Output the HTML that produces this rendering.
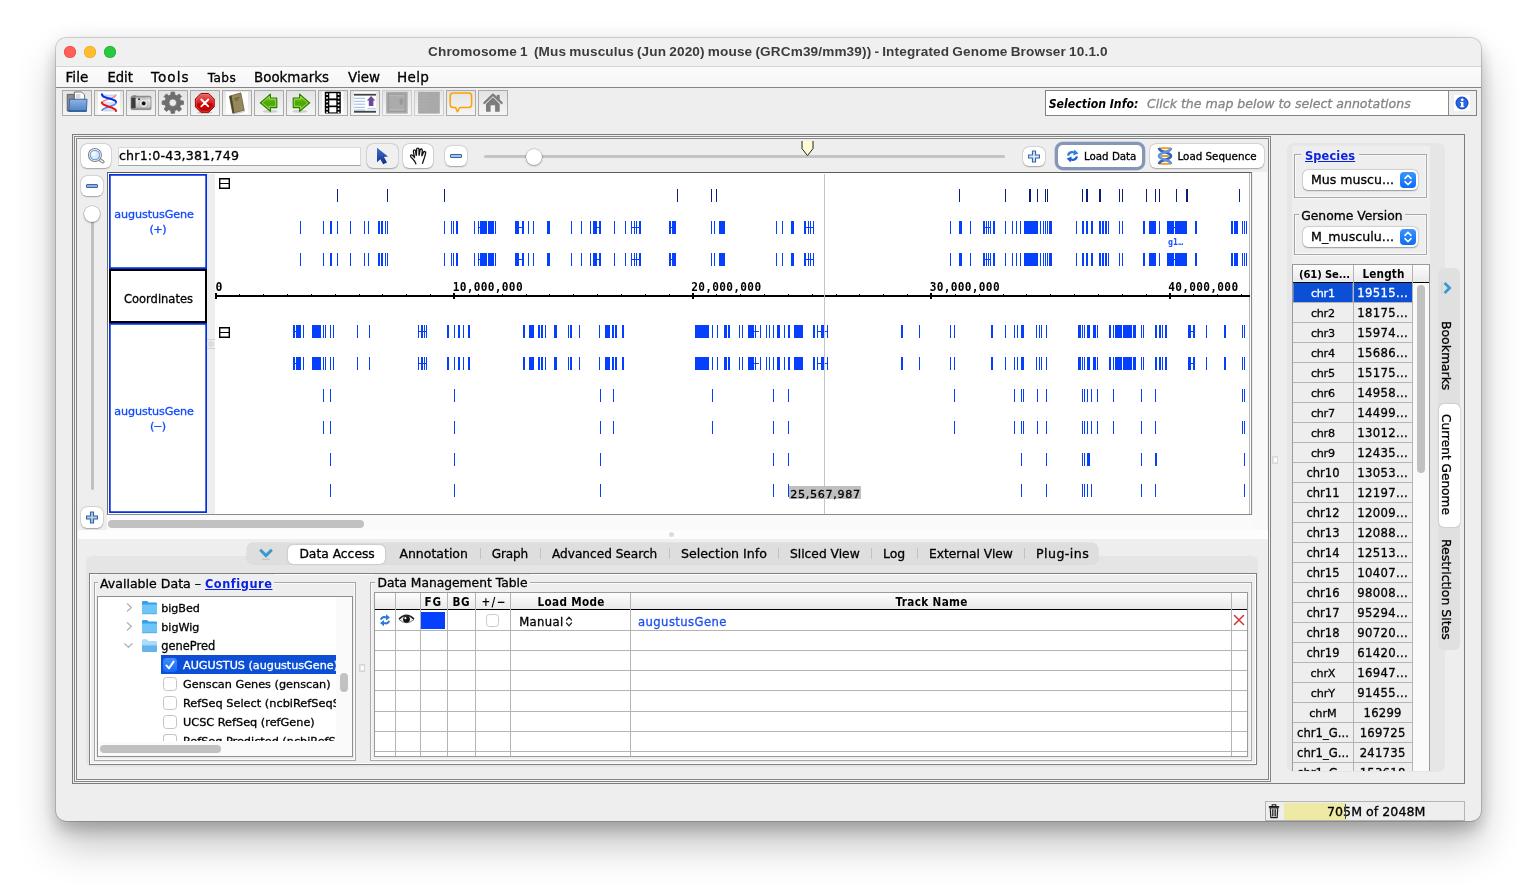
<!DOCTYPE html>
<html><head><meta charset="utf-8"><title>Integrated Genome Browser</title><style>
html,body{margin:0;padding:0;background:#fff;}
body{width:1537px;height:895px;position:relative;overflow:hidden;}
div,svg,span{position:absolute;box-sizing:border-box;}
.t{white-space:pre;line-height:20px;height:20px;}
#root{left:0;top:0;width:1537px;height:895px;will-change:transform;}
</style></head><body><div id="root">
<div style="left:55.7px;top:37.5px;width:1425.8px;height:783px;background:#eeeeee;border-radius:10px;box-shadow:0 0 0 0.7px rgba(0,0,0,0.22),0 24px 40px rgba(0,0,0,0.24),0 10px 16px rgba(0,0,0,0.18),0 0 22px rgba(0,0,0,0.07);"></div>
<div style="left:55.7px;top:37.5px;width:1425.8px;height:29.5px;background:#f0f0f0;border-radius:10px 10px 0 0;border-bottom:1px solid #d6d6d6;"></div>
<div style="left:64px;top:46px;width:12px;height:12px;background:#fe5f57;border-radius:50%;box-shadow:inset 0 0 0 0.5px #e0443e;"></div>
<div style="left:84px;top:46px;width:12px;height:12px;background:#febc2e;border-radius:50%;box-shadow:inset 0 0 0 0.5px #dea123;"></div>
<div style="left:104px;top:46px;width:12px;height:12px;background:#28c840;border-radius:50%;box-shadow:inset 0 0 0 0.5px #1aab29;"></div>
<span id="t0" class="t" style="left:428px;top:41.50px;font-size:13.58px;font-family:'Liberation Sans','DejaVu Sans',sans-serif;color:#3c3c3c;font-weight:bold;letter-spacing:0.141px;word-spacing:-0.8px;">Chromosome 1  (Mus musculus (Jun 2020) mouse (GRCm39/mm39)) - Integrated Genome Browser 10.1.0</span>
<div style="left:55.7px;top:67px;width:1425.8px;height:21px;background:linear-gradient(#fbfbfb,#f6f6f6);border-bottom:1px solid #858585;"></div>
<span id="t1" class="t" style="left:65.5px;top:67.00px;font-size:13.58px;font-family:'DejaVu Sans','Liberation Sans',sans-serif;color:#000;-webkit-text-stroke:0.3px;letter-spacing:0.022px;">File</span>
<span id="t2" class="t" style="left:107.4px;top:67.50px;font-size:13.16px;font-family:'DejaVu Sans','Liberation Sans',sans-serif;color:#000;-webkit-text-stroke:0.3px;">Edit</span>
<span id="t3" class="t" style="left:151px;top:67.00px;font-size:13.58px;font-family:'DejaVu Sans','Liberation Sans',sans-serif;color:#000;-webkit-text-stroke:0.3px;letter-spacing:1.009px;">Tools</span>
<span id="t4" class="t" style="left:207.8px;top:68.00px;font-size:12.12px;font-family:'DejaVu Sans','Liberation Sans',sans-serif;color:#000;-webkit-text-stroke:0.3px;letter-spacing:0.381px;">Tabs</span>
<span id="t5" class="t" style="left:254px;top:67.50px;font-size:13.42px;font-family:'DejaVu Sans','Liberation Sans',sans-serif;color:#000;-webkit-text-stroke:0.3px;">Bookmarks</span>
<span id="t6" class="t" style="left:348px;top:67.00px;font-size:13.48px;font-family:'DejaVu Sans','Liberation Sans',sans-serif;color:#000;-webkit-text-stroke:0.3px;">View</span>
<span id="t7" class="t" style="left:397px;top:67.00px;font-size:13.58px;font-family:'DejaVu Sans','Liberation Sans',sans-serif;color:#000;-webkit-text-stroke:0.3px;letter-spacing:0.345px;">Help</span>
<div style="left:62px;top:90px;width:30px;height:26px;border:1px solid #a9a9a9;background:linear-gradient(#e3e3e3,#f5f5f5);"></div>
<div style="left:94px;top:90px;width:30px;height:26px;border:1px solid #a9a9a9;background:linear-gradient(#e3e3e3,#f5f5f5);"></div>
<div style="left:126px;top:90px;width:30px;height:26px;border:1px solid #a9a9a9;background:linear-gradient(#e3e3e3,#f5f5f5);"></div>
<div style="left:158px;top:90px;width:30px;height:26px;border:1px solid #a9a9a9;background:linear-gradient(#e3e3e3,#f5f5f5);"></div>
<div style="left:190px;top:90px;width:30px;height:26px;border:1px solid #a9a9a9;background:linear-gradient(#e3e3e3,#f5f5f5);"></div>
<div style="left:222px;top:90px;width:30px;height:26px;border:1px solid #a9a9a9;background:linear-gradient(#e3e3e3,#f5f5f5);"></div>
<div style="left:254px;top:90px;width:30px;height:26px;border:1px solid #a9a9a9;background:linear-gradient(#e3e3e3,#f5f5f5);"></div>
<div style="left:286px;top:90px;width:30px;height:26px;border:1px solid #a9a9a9;background:linear-gradient(#e3e3e3,#f5f5f5);"></div>
<div style="left:318px;top:90px;width:30px;height:26px;border:1px solid #a9a9a9;background:linear-gradient(#e3e3e3,#f5f5f5);"></div>
<div style="left:350px;top:90px;width:30px;height:26px;border:1px solid #a9a9a9;background:linear-gradient(#e3e3e3,#f5f5f5);"></div>
<div style="left:382px;top:90px;width:30px;height:26px;border:1px solid #cdcdcd;background:linear-gradient(#e3e3e3,#f5f5f5);"></div>
<div style="left:414px;top:90px;width:30px;height:26px;border:1px solid #cdcdcd;background:linear-gradient(#e3e3e3,#f5f5f5);"></div>
<div style="left:446px;top:90px;width:30px;height:26px;border:1px solid #a9a9a9;background:linear-gradient(#e3e3e3,#f5f5f5);"></div>
<div style="left:478px;top:90px;width:30px;height:26px;border:1px solid #a9a9a9;background:linear-gradient(#e3e3e3,#f5f5f5);"></div>
<svg style="left:62px;top:90px" width="30" height="26" viewBox="0 0 30 26" ><defs><linearGradient id="gf" x1="0" y1="0" x2="0" y2="1"><stop offset="0" stop-color="#8fb4e3"/><stop offset="1" stop-color="#4f82c4"/></linearGradient></defs>
<path d="M5.2 4.4 H12.2 V21 H5.2 Z" fill="#8a8d90" stroke="#4c4f52" stroke-width="0.8"/>
<path d="M12.4 2 H19.6 L22.6 5 V10 H12.4 Z" fill="#fff" stroke="#555" stroke-width="0.8" stroke-linejoin="round"/>
<path d="M14 5 H18.5 M14 7 H18.5" stroke="#999" stroke-width="0.7"/>
<path d="M7.6 9.2 H25 L24.4 21.4 H6.8 Z" fill="url(#gf)" stroke="#2f5f9e" stroke-width="0.9" stroke-linejoin="round"/>
<path d="M6.8 20.9 H24.4" stroke="#27508a" stroke-width="1"/></svg>
<svg style="left:94px;top:90px" width="30" height="26" viewBox="0 0 30 26" ><rect x="4" y="1.8" width="22" height="21.8" fill="#fff"/>
<path d="M9 5.2 H21 M9.5 7 H20.5 M10 13 H20 M9.5 15 H20.5 M9 19 H21 M9.5 20.8 H20.5" stroke="#9cc4ee" stroke-width="0.9"/>
<path d="M22 4.4 C22 9 8 9.5 8 13" fill="none" stroke="#e88" stroke-width="1.6"/>
<path d="M8 4.4 C8 9 22 8 22 12.2" fill="none" stroke="#0a2cf0" stroke-width="2.2" stroke-linecap="round"/>
<path d="M22 12.5 C22 17 8 16.5 8 21" fill="none" stroke="#5a86e0" stroke-width="1.8"/>
<path d="M8 12.6 C8 17 22 16.5 22 21" fill="none" stroke="#f01010" stroke-width="2.2" stroke-linecap="round"/></svg>
<svg style="left:126px;top:90px" width="30" height="26" viewBox="0 0 30 26" ><defs><linearGradient id="gc" x1="0" y1="0" x2="0" y2="1"><stop offset="0" stop-color="#8c8c8c"/><stop offset="0.25" stop-color="#e6e6e6"/><stop offset="0.8" stop-color="#c4c4c4"/><stop offset="1" stop-color="#7c7c7c"/></linearGradient></defs>
<rect x="6.5" y="5.2" width="4" height="2" rx="0.8" fill="#8a8a8a"/>
<rect x="5" y="6.2" width="20" height="13.4" rx="1.2" fill="url(#gc)" stroke="#6a6a6a" stroke-width="0.6"/>
<rect x="5.2" y="7.6" width="4.4" height="10.6" fill="#3c3c3c"/>
<rect x="20.5" y="7.2" width="3.4" height="2" fill="#b8c8dc"/>
<circle cx="17.7" cy="13.4" r="4.2" fill="#f2f2f2" stroke="#a0a0a0" stroke-width="0.6"/>
<circle cx="17.7" cy="13.4" r="2.7" fill="#bdbdbd"/>
<circle cx="17.7" cy="13.4" r="1.8" fill="#0c0c0c"/>
<circle cx="13" cy="9.2" r="1" fill="#2a2a2a"/></svg>
<svg style="left:158px;top:90px" width="30" height="26" viewBox="0 0 30 26" ><path d="M12.80 4.85 L13.08 2.04 L16.52 2.04 L16.80 4.85 L18.93 5.73 L21.12 3.94 L23.56 6.38 L21.77 8.57 L22.65 10.70 L25.46 10.98 L25.46 14.42 L22.65 14.70 L21.77 16.83 L23.56 19.02 L21.12 21.46 L18.93 19.67 L16.80 20.55 L16.52 23.36 L13.08 23.36 L12.80 20.55 L10.67 19.67 L8.48 21.46 L6.04 19.02 L7.83 16.83 L6.95 14.70 L4.14 14.42 L4.14 10.98 L6.95 10.70 L7.83 8.57 L6.04 6.38 L8.48 3.94 L10.67 5.73Z M18.6 12.7 A3.8 3.8 0 1 0 11 12.7 A3.8 3.8 0 1 0 18.6 12.7Z" fill="#6e6e6e" fill-rule="evenodd" stroke="#6e6e6e" stroke-width="0.8" stroke-linejoin="round"/></svg>
<svg style="left:190px;top:90px" width="30" height="26" viewBox="0 0 30 26" ><defs><linearGradient id="gs" x1="0" y1="0" x2="0" y2="1"><stop offset="0" stop-color="#e86a6a"/><stop offset="0.5" stop-color="#d62020"/><stop offset="0.55" stop-color="#c80000"/><stop offset="1" stop-color="#c40000"/></linearGradient></defs>
<ellipse cx="14.8" cy="22.6" rx="8" ry="1.2" fill="#000" opacity="0.18"/>
<path d="M24.22 16.80 L18.70 22.32 L10.90 22.32 L5.38 16.80 L5.38 9.00 L10.90 3.48 L18.70 3.48 L24.22 9.00Z" fill="url(#gs)" stroke="#a00000" stroke-width="1"/>
<path d="M23.21 16.38 L18.28 21.31 L11.32 21.31 L6.39 16.38 L6.39 9.42 L11.32 4.49 L18.28 4.49 L23.21 9.42Z" fill="none" stroke="#f08a8a" stroke-width="0.6" opacity="0.7"/>
<path d="M11.3 9.5 L18.3 16.3 M18.3 9.5 L11.3 16.3" stroke="#fff" stroke-width="1.8" stroke-linecap="round"/></svg>
<svg style="left:222px;top:90px" width="30" height="26" viewBox="0 0 30 26" ><rect x="4" y="1.8" width="22" height="21.8" fill="#fff"/>
<path d="M10.7 23.1 L22.2 20.2 L22.4 21.6 L11 24 Z" fill="#e8e8e8" stroke="#888" stroke-width="0.4"/>
<path d="M7.4 6.2 L18.8 2.8 L22.2 20.1 L10.7 23.1 Z" fill="#96885a" stroke="#5f5535" stroke-width="0.7" stroke-linejoin="round"/>
<path d="M7.4 6.2 L9.6 5.5 L12.3 22.7 L10.7 23.1 Z" fill="#4e4528"/>
<path d="M12.5 8.8 L17.6 7.4 M13 10.4 L16.6 9.4" stroke="#5f5535" stroke-width="0.9"/></svg>
<svg style="left:254px;top:90px" width="30" height="26" viewBox="0 0 30 26" ><defs><linearGradient id="ga" x1="0" y1="0" x2="0" y2="1"><stop offset="0" stop-color="#8ad82a"/><stop offset="0.5" stop-color="#4aa800"/><stop offset="1" stop-color="#5cbc10"/></linearGradient></defs>
<ellipse cx="16" cy="21.4" rx="7.5" ry="1.6" fill="#000" opacity="0.14"/>
<path d="M6.3 12.8 L16.4 4.1 V8 H22.8 V17.6 H16.4 V21.4 Z" fill="url(#ga)" stroke="#2c7a00" stroke-width="1.1" stroke-linejoin="round"/>
<path d="M8.2 12.8 L15.3 6.7 V9.2 H21.6 V16.4 H15.3 V18.9 Z" fill="none" stroke="#c6ee8a" stroke-width="0.7" opacity="0.85"/></svg>
<svg style="left:286px;top:90px" width="30" height="26" viewBox="0 0 30 26" ><ellipse cx="14" cy="21.4" rx="7.5" ry="1.6" fill="#000" opacity="0.14"/>
<path d="M23.7 12.8 L13.6 4.1 V8 H7.2 V17.6 H13.6 V21.4 Z" fill="url(#ga)" stroke="#2c7a00" stroke-width="1.1" stroke-linejoin="round"/>
<path d="M21.8 12.8 L14.7 6.7 V9.2 H8.4 V16.4 H14.7 V18.9 Z" fill="none" stroke="#c6ee8a" stroke-width="0.7" opacity="0.85"/></svg>
<svg style="left:318px;top:90px" width="30" height="26" viewBox="0 0 30 26" ><rect x="4.2" y="1.8" width="21.2" height="21.8" fill="#fff"/>
<rect x="6.8" y="1.8" width="16" height="21.8" rx="0.8" fill="#000"/>
<rect x="11.3" y="3.2" width="7" height="5.2" fill="#fff"/><rect x="11.3" y="10.3" width="7" height="5.2" fill="#fff"/><rect x="11.3" y="17.2" width="7" height="5.2" fill="#fff"/><rect x="8.2" y="3.4" width="1.7" height="1.6" fill="#fff"/><rect x="19.7" y="3.4" width="1.7" height="1.6" fill="#fff"/><rect x="8.2" y="7.1" width="1.7" height="1.6" fill="#fff"/><rect x="19.7" y="7.1" width="1.7" height="1.6" fill="#fff"/><rect x="8.2" y="10.8" width="1.7" height="1.6" fill="#fff"/><rect x="19.7" y="10.8" width="1.7" height="1.6" fill="#fff"/><rect x="8.2" y="14.5" width="1.7" height="1.6" fill="#fff"/><rect x="19.7" y="14.5" width="1.7" height="1.6" fill="#fff"/><rect x="8.2" y="18.2" width="1.7" height="1.6" fill="#fff"/><rect x="19.7" y="18.2" width="1.7" height="1.6" fill="#fff"/><rect x="8.2" y="21.6" width="1.7" height="1.6" fill="#fff"/><rect x="19.7" y="21.6" width="1.7" height="1.6" fill="#fff"/></svg>
<svg style="left:350px;top:90px" width="30" height="26" viewBox="0 0 30 26" ><rect x="4" y="1.8" width="22" height="21.8" fill="#fff"/>
<rect x="4" y="3.8" width="22" height="1.8" fill="#444"/><rect x="4" y="20.8" width="22" height="1.9" fill="#444"/>
<path d="M4.1 8.3 H15 M4.1 11.3 H15 M4.1 14.2 H15 M4.1 17.3 H15 M4.1 20.1 H15" stroke="#8ab0d8" stroke-width="0.9"/>
<rect x="17.5" y="17.9" width="8.5" height="1.4" fill="#b4d2ee"/>
<path d="M21.1 6 L25.3 10.5 H23.4 V16 H18.8 V10.5 H16.9 Z" fill="#6a4a9a"/></svg>
<svg style="left:382px;top:90px" width="30" height="26" viewBox="0 0 30 26" ><rect x="4.1" y="1.8" width="21.6" height="21.8" fill="#ababab"/>
<rect x="6.6" y="4" width="16.6" height="17.4" fill="none" stroke="#9a9a9a" stroke-width="1"/>
<rect x="7.4" y="5" width="15" height="1.4" fill="#b6b6b6"/><rect x="7.4" y="19" width="15" height="1.4" fill="#b6b6b6"/>
<path d="M19.2 8.2 L22 11.2 H20.6 V14.6 H17.8 V11.2 H16.4 Z" fill="#989898"/></svg>
<svg style="left:414px;top:90px" width="30" height="26" viewBox="0 0 30 26" ><rect x="4.1" y="1.8" width="21.7" height="21.8" fill="#a9a9a9"/>
<path d="M4.5 5 H14.5 M4.5 8 H14.5 M4.5 11 H14.5 M4.5 14 H14.5 M4.5 17 H14.5 M4.5 20 H14.5" stroke="#b2b2b2" stroke-width="0.8"/></svg>
<svg style="left:446px;top:90px" width="30" height="26" viewBox="0 0 30 26" ><path d="M7.2 3 H22.6 Q25.6 3 25.6 6 V14.6 Q25.6 17.6 22.6 17.6 H13.6 L11.4 21.8 L9.6 17.6 H7.2 Q4.2 17.6 4.2 14.6 V6 Q4.2 3 7.2 3 Z" fill="none" stroke="#ffa000" stroke-width="1.5" stroke-linejoin="round"/></svg>
<svg style="left:478px;top:90px" width="30" height="26" viewBox="0 0 30 26" ><path d="M6.3 13 L15 4.6 L23.7 13" fill="none" stroke="#7c7c7c" stroke-width="2.2" stroke-linecap="round" stroke-linejoin="round"/>
<rect x="18.8" y="4.9" width="2.9" height="5.5" fill="#7c7c7c"/>
<path d="M8 14 L15 7.3 L21.7 14 V21.8 H17.1 V15.2 H12.6 V21.8 H8 Z" fill="#7c7c7c"/></svg>
<div style="left:1045px;top:90px;width:432px;height:26px;background:#fff;border:1px solid #828282;"></div>
<div style="left:1448px;top:91px;width:28px;height:24px;background:#f0f0f0;border-left:1px solid #8a8a8a;"></div>
<div style="left:1454px;top:95px;width:16px;height:16px;background:#fff;"></div>
<span id="t8" class="t" style="left:1048.7px;top:94.00px;font-size:12.18px;font-family:'DejaVu Sans Condensed','DejaVu Sans',sans-serif;color:#000;font-weight:bold;font-style:italic;">Selection Info:</span>
<span id="t9" class="t" style="left:1147px;top:93.50px;font-size:12.56px;font-family:'DejaVu Sans','Liberation Sans',sans-serif;color:#858585;-webkit-text-stroke:0.3px;font-style:italic;">Click the map below to select annotations</span>
<svg style="left:1455px;top:96px" width="14" height="14" viewBox="0 0 14 14" ><circle cx="7" cy="7" r="6.5" fill="#1c4fc4"/><circle cx="7" cy="7" r="5.2" fill="#2a66e0"/><rect x="6" y="6" width="2.4" height="5" fill="#fff"/><circle cx="7.2" cy="3.8" r="1.4" fill="#fff"/><rect x="5.2" y="6" width="2" height="1" fill="#fff"/><rect x="5.2" y="10.2" width="4" height="1" fill="#fff"/></svg>
<div style="left:72px;top:134px;width:1393px;height:650px;border:1px solid #7c7c7c;"></div>
<div style="left:74px;top:136px;width:1197px;height:646px;border:1px solid #858585;"></div>
<div style="left:76px;top:138px;width:1193px;height:642px;border:1px solid #858585;box-shadow:0 0 0 1px #f6f6f6;"></div>
<div style="left:81px;top:144px;width:30px;height:24px;background:#fff;border-radius:6px;box-shadow:0 0 0 0.5px rgba(0,0,0,0.12),0 0.5px 1.5px rgba(0,0,0,0.28);"></div>
<svg style="left:86px;top:146px" width="20" height="20" viewBox="0 0 20 20" ><path d="M13 13.1 L17 15.9" stroke="#7a7a7a" stroke-width="3.2" stroke-linecap="round"/><path d="M13.4 13.4 L16.9 15.8" stroke="#f4f4f4" stroke-width="1.4" stroke-linecap="round"/><circle cx="8.9" cy="9" r="6.5" fill="#fff" stroke="#858585" stroke-width="1.1"/><circle cx="8.9" cy="9" r="4.7" fill="#dbe8f8" stroke="#6fa2e2" stroke-width="1.2"/><circle cx="7.8" cy="7.8" r="2.4" fill="#f2f7fd" opacity="0.9"/></svg>
<div style="left:117.5px;top:146.5px;width:243px;height:19.5px;background:#fff;border:1px solid #d9d9d9;border-bottom-color:#a4a4a4;"></div>
<span id="t10" class="t" style="left:119px;top:146.00px;font-size:12.61px;font-family:'DejaVu Sans','Liberation Sans',sans-serif;color:#000;-webkit-text-stroke:0.3px;letter-spacing:0.178px;">chr1:0-43,381,749</span>
<div style="left:367px;top:143.5px;width:30.5px;height:24.5px;background:#fff;border-radius:6px;box-shadow:0 0 0 0.5px rgba(0,0,0,0.12),0 0.5px 1.5px rgba(0,0,0,0.28);background:#f0f0f0;"></div>
<svg style="left:372px;top:145px" width="20" height="22" viewBox="0 0 20 22" ><defs><linearGradient id="gp" x1="0" y1="0" x2="0" y2="1"><stop offset="0" stop-color="#3f73cf"/><stop offset="1" stop-color="#122c8a"/></linearGradient></defs><path d="M5 2.8 L5 17.3 L8.3 14.3 L11.2 19.2 L15 17.4 L12 12 L16 11.4 Z" fill="url(#gp)"/></svg>
<div style="left:403px;top:144px;width:30px;height:24px;background:#fff;border-radius:6px;box-shadow:0 0 0 0.5px rgba(0,0,0,0.12),0 0.5px 1.5px rgba(0,0,0,0.28);"></div>
<svg style="left:408px;top:146px" width="20" height="20" viewBox="0 0 20 20" ><path d="M7.9 17.8 C7.2 15 4.6 13 2.8 10.8 C1.9 9.4 3.4 8.2 4.6 9.4 L6.6 11.6 L5.4 5.6 C5.2 3.6 7.4 3.2 7.6 5.2 L8.2 9.4 M8.4 9.2 L8.6 3.6 C8.6 1.6 10.9 1.6 11 3.6 L11 9.2 M11.2 9.2 L12 4.2 C12.3 2.4 14.5 2.7 14.3 4.6 L13.8 9.6 M14 9.8 L15.4 6.4 C16.2 4.8 18.2 5.6 17.6 7.4 C17 10 16.6 11.5 15.8 13.5 L14.5 17.4" fill="none" stroke="#111" stroke-width="1.3" stroke-linecap="round" stroke-linejoin="round"/></svg>
<div style="left:445px;top:146px;width:22px;height:20px;background:#fff;border-radius:6px;box-shadow:0 0 0 0.5px rgba(0,0,0,0.12),0 0.5px 1.5px rgba(0,0,0,0.28);"></div>
<div style="left:450px;top:154px;width:12px;height:4px;background:#a9c4e8;border:1px solid #3465a4;border-radius:1px;"></div>
<div style="left:484px;top:155px;width:521px;height:3px;background:#c4c4c4;border-radius:1.5px;"></div>
<div style="left:526.4px;top:148.5px;width:16px;height:16px;background:#fff;border-radius:50%;box-shadow:0 0 0 0.5px rgba(0,0,0,0.25),0 1px 2px rgba(0,0,0,0.3);"></div>
<svg style="left:801px;top:141px" width="13" height="16" viewBox="0 0 13 16" ><path d="M1 0 V7.6 L6.5 14.6 L12 7.6 V0 Z" fill="#fffbd2"/><path d="M1 0 V7.6 L6.5 14.6 L12 7.6 V0" fill="none" stroke="#222" stroke-width="1" stroke-linejoin="miter"/></svg>
<div style="left:1023px;top:147px;width:22px;height:19px;background:#fff;border-radius:6px;box-shadow:0 0 0 0.5px rgba(0,0,0,0.12),0 0.5px 1.5px rgba(0,0,0,0.28);"></div>
<svg style="left:1028px;top:150px" width="12" height="13" viewBox="0 0 12 13" ><path d="M4.5 1 H7.5 V5 H11.5 V8 H7.5 V12 H4.5 V8 H0.5 V5 H4.5 Z" fill="#dce8f7" stroke="#3465a4" stroke-width="1.2" stroke-linejoin="round"/></svg>
<div style="left:1055px;top:142px;width:90px;height:28px;border-radius:8px;background:#8497b6;box-shadow:0 0 0 0.5px #a9b6cb;"></div>
<div style="left:1058px;top:145px;width:84px;height:22px;background:#fff;border-radius:5px;"></div>
<svg style="left:1065px;top:148px" width="15" height="16" viewBox="0 0 15 16" ><path d="M2 7.4 C2.4 3.8 6 2.2 9 3.6 L9.4 1.4 L13.4 5.4 L8.2 7.6 L8.6 5.6 C6.6 4.9 4.8 5.8 4.2 7.8 Z" fill="#2f7fe0"/><path d="M13 8.6 C12.6 12.2 9 13.8 6 12.4 L5.6 14.6 L1.6 10.6 L6.8 8.4 L6.4 10.4 C8.4 11.1 10.2 10.2 10.8 8.2 Z" fill="#1f62c8"/></svg>
<span id="t11" class="t" style="left:1084px;top:146.00px;font-size:10.28px;font-family:'DejaVu Sans','Liberation Sans',sans-serif;color:#000;-webkit-text-stroke:0.3px;">Load Data</span>
<div style="left:1150px;top:144px;width:114px;height:24px;background:#fff;border-radius:6px;box-shadow:0 0 0 0.5px rgba(0,0,0,0.12),0 0.5px 1.5px rgba(0,0,0,0.28);"></div>
<svg style="left:1157px;top:147px" width="16" height="18" viewBox="0 0 16 18" ><path d="M2 1.2 H14 M2 16.8 H14 M3.5 9 H12.5" stroke="#f0a020" stroke-width="1.8"/><path d="M3.5 3.4 H12.5 M3.5 14.6 H12.5" stroke="#f7c860" stroke-width="1.2"/><path d="M2 1 C2 6 14 4.5 14 9 C14 13.5 2 12 2 17" fill="none" stroke="#2d62c4" stroke-width="2.6"/><path d="M14 1 C14 6 2 4.5 2 9 C2 13.5 14 12 14 17" fill="none" stroke="#5e92e6" stroke-width="2.6"/></svg>
<span id="t12" class="t" style="left:1177.5px;top:146.00px;font-size:10.33px;font-family:'DejaVu Sans','Liberation Sans',sans-serif;color:#000;-webkit-text-stroke:0.3px;">Load Sequence</span>
<div style="left:81px;top:176px;width:22px;height:20px;background:#fff;border-radius:6px;box-shadow:0 0 0 0.5px rgba(0,0,0,0.12),0 0.5px 1.5px rgba(0,0,0,0.28);"></div>
<div style="left:86px;top:184px;width:12px;height:4px;background:#8fb0dc;border:1px solid #3d68a8;border-radius:1px;"></div>
<div style="left:91px;top:220px;width:3px;height:270px;background:#c0c0c0;border-radius:1.5px;"></div>
<div style="left:84px;top:206px;width:16px;height:16px;background:#fff;border-radius:50%;box-shadow:0 0 0 0.5px rgba(0,0,0,0.25),0 1px 2px rgba(0,0,0,0.3);"></div>
<div style="left:81px;top:507px;width:22px;height:20.5px;background:#fff;border-radius:6px;box-shadow:0 0 0 0.5px rgba(0,0,0,0.12),0 0.5px 1.5px rgba(0,0,0,0.28);"></div>
<svg style="left:86px;top:510.5px" width="12" height="13" viewBox="0 0 12 13" ><path d="M4.5 1 H7.5 V5 H11.5 V8 H7.5 V12 H4.5 V8 H0.5 V5 H4.5 Z" fill="#b5cbe8" stroke="#3465a4" stroke-width="1.2" stroke-linejoin="round"/></svg>
<div style="left:107px;top:172px;width:1145px;height:343px;background:#fff;border:1px solid #8a8a8a;border-top:1px solid #5c5c5c;border-left-color:#6a6a6a;"></div>
<div style="left:1249px;top:173px;width:1px;height:341px;background:#b8b8b8;"></div>
<div style="left:1253px;top:172px;width:14px;height:358px;background:#f9f9f9;"></div>
<div style="left:108px;top:174px;width:101px;height:340px;background:#fff;"></div>
<div style="left:207px;top:174px;width:8px;height:340px;background:#eeeeee;"></div>
<div style="left:109px;top:174px;width:98px;height:95px;border:1px solid #0530e0;background:#fff;box-shadow:inset 0 0 0 0.7px #0530e0;"></div>
<div style="left:109px;top:269px;width:98px;height:54px;border:2px solid #000;background:#fff;"></div>
<div style="left:109px;top:323px;width:98px;height:190px;border:1px solid #0530e0;background:#fff;box-shadow:inset 0 0 0 0.7px #0530e0;"></div>
<span id="t13" class="t" style="left:114.3px;top:204.90px;font-size:11.16px;font-family:'DejaVu Sans','Liberation Sans',sans-serif;color:#0f4aff;-webkit-text-stroke:0.3px;letter-spacing:-0.082px;">augustusGene</span>
<span id="t14" class="t" style="left:149.5px;top:219.90px;font-size:11.16px;font-family:'DejaVu Sans','Liberation Sans',sans-serif;color:#0f4aff;-webkit-text-stroke:0.3px;letter-spacing:-0.531px;">(+)</span>
<span id="t15" class="t" style="left:114.3px;top:401.90px;font-size:11.16px;font-family:'DejaVu Sans','Liberation Sans',sans-serif;color:#0f4aff;-webkit-text-stroke:0.3px;letter-spacing:-0.082px;">augustusGene</span>
<span id="t16" class="t" style="left:150px;top:416.90px;font-size:11.16px;font-family:'DejaVu Sans','Liberation Sans',sans-serif;color:#0f4aff;-webkit-text-stroke:0.3px;letter-spacing:-1.031px;">(−)</span>
<span id="t17" class="t" style="left:124px;top:288.50px;font-size:11.49px;font-family:'DejaVu Sans','Liberation Sans',sans-serif;color:#000;-webkit-text-stroke:0.3px;">Coordinates</span>
<div style="left:219px;top:178px;width:11px;height:11px;border:1px solid #000;background:#fff;box-shadow:inset 0 0 0 0.4px #000;"></div>
<div style="left:220px;top:183px;width:9px;height:1.2px;background:#000;"></div>
<div style="left:219px;top:327px;width:11px;height:11px;border:1px solid #000;background:#fff;box-shadow:inset 0 0 0 0.4px #000;"></div>
<div style="left:220px;top:332px;width:9px;height:1.2px;background:#000;"></div>
<div style="left:207px;top:339px;width:8px;height:1px;background:#d0d0d0;"></div>
<div style="left:207px;top:348px;width:8px;height:1px;background:#d0d0d0;"></div>
<div style="left:208px;top:341px;width:6px;height:6px;background:#dcdcdc;border-radius:50%;"></div>
<svg style="left:215px;top:174px" width="1035" height="340" viewBox="0 0 1035 340" shape-rendering="crispEdges"><path fill="#0a1f7a" d="M122 15h1v13h-1zM172 15h1v13h-1zM229 15h1v13h-1zM462 15h1v13h-1zM496 15h1v13h-1zM501 15h1v13h-1zM744 15h1v13h-1zM790 15h1v13h-1zM814 15h2v13h-2zM822 15h1v13h-1zM830 15h1v13h-1zM832 15h1v13h-1zM867 15h1v13h-1zM871 15h2v13h-2zM884 15h2v13h-2zM904 15h1v13h-1zM907 15h1v13h-1zM931 15h1v13h-1zM940 15h1v13h-1zM944 15h1v13h-1zM961 15h1v13h-1zM971 15h2v13h-2zM1024 15h1v13h-1z"/>
<path fill="#0540ff" d="M85 47h1v13h-1zM108 47h1v13h-1zM115 47h2v13h-2zM122 47h1v13h-1zM135 47h1v13h-1zM149 47h1v13h-1zM153 47h1v13h-1zM163 47h2v13h-2zM166 47h2v13h-2zM170 47h1v13h-1zM172 47h1v13h-1zM229 47h1v13h-1zM236 47h1v13h-1zM238 47h1v13h-1zM241 47h2v13h-2zM259 47h1v13h-1zM263 47h1v13h-1zM265 47h7v13h-7zM273 47h6v13h-6zM280 47h1v13h-1zM300 47h4v13h-4zM307 47h2v13h-2zM313 47h1v13h-1zM318 47h1v13h-1zM332 47h3v13h-3zM356 47h1v13h-1zM366 47h1v13h-1zM375 47h1v13h-1zM378 47h4v13h-4zM384 47h2v13h-2zM399 47h1v13h-1zM410 47h1v13h-1zM416 47h1v13h-1zM419 47h1v13h-1zM421 47h1v13h-1zM424 47h2v13h-2zM454 47h2v13h-2zM457 47h4v13h-4zM496 47h1v13h-1zM499 47h1v13h-1zM504 47h6v13h-6zM561 47h1v13h-1zM567 47h1v13h-1zM576 47h3v13h-3zM589 47h2v13h-2zM593 47h1v13h-1zM595 47h1v13h-1zM598 47h1v13h-1zM735 47h1v13h-1zM744 47h3v13h-3zM755 47h1v13h-1zM768 47h1v13h-1zM769 47h1v13h-1zM771 47h1v13h-1zM773 47h1v13h-1zM775 47h1v13h-1zM778 47h2v13h-2zM790 47h1v13h-1zM797 47h1v13h-1zM801 47h1v13h-1zM805 47h1v13h-1zM809 47h14v13h-14zM825 47h1v13h-1zM828 47h1v13h-1zM830 47h1v13h-1zM832 47h1v13h-1zM834 47h3v13h-3zM861 47h1v13h-1zM867 47h2v13h-2zM871 47h2v13h-2zM876 47h2v13h-2zM884 47h2v13h-2zM887 47h2v13h-2zM890 47h2v13h-2zM893 47h1v13h-1zM904 47h1v13h-1zM907 47h1v13h-1zM928 47h2v13h-2zM934 47h7v13h-7zM944 47h1v13h-1zM952 47h7v13h-7zM960 47h12v13h-12zM980 47h2v13h-2zM1016 47h2v13h-2zM1019 47h4v13h-4zM1027 47h1v13h-1zM1029 47h1v13h-1zM1031 47h1v13h-1zM263 53h2v1h-2zM304 53h3v1h-3zM382 53h2v1h-2zM416 53h10v1h-10zM456 53h1v1h-1zM591 53h7v1h-7zM768 53h7v1h-7zM959 53h1v1h-1z"/>
<path fill="#0540ff" d="M85 79h1v13h-1zM108 79h1v13h-1zM115 79h2v13h-2zM122 79h1v13h-1zM135 79h1v13h-1zM149 79h1v13h-1zM153 79h1v13h-1zM163 79h2v13h-2zM166 79h2v13h-2zM170 79h1v13h-1zM172 79h1v13h-1zM229 79h1v13h-1zM236 79h1v13h-1zM238 79h1v13h-1zM241 79h2v13h-2zM259 79h1v13h-1zM263 79h1v13h-1zM265 79h7v13h-7zM273 79h6v13h-6zM280 79h1v13h-1zM300 79h4v13h-4zM307 79h2v13h-2zM313 79h1v13h-1zM318 79h1v13h-1zM332 79h3v13h-3zM356 79h1v13h-1zM366 79h1v13h-1zM375 79h1v13h-1zM378 79h4v13h-4zM384 79h2v13h-2zM399 79h1v13h-1zM410 79h1v13h-1zM416 79h1v13h-1zM419 79h1v13h-1zM421 79h1v13h-1zM424 79h2v13h-2zM454 79h2v13h-2zM457 79h4v13h-4zM496 79h1v13h-1zM499 79h1v13h-1zM504 79h6v13h-6zM561 79h1v13h-1zM567 79h1v13h-1zM576 79h3v13h-3zM589 79h2v13h-2zM593 79h1v13h-1zM595 79h1v13h-1zM598 79h1v13h-1zM735 79h1v13h-1zM744 79h3v13h-3zM755 79h1v13h-1zM768 79h1v13h-1zM769 79h1v13h-1zM771 79h1v13h-1zM773 79h1v13h-1zM775 79h1v13h-1zM778 79h2v13h-2zM790 79h1v13h-1zM797 79h1v13h-1zM801 79h1v13h-1zM805 79h1v13h-1zM809 79h14v13h-14zM825 79h1v13h-1zM828 79h1v13h-1zM830 79h1v13h-1zM832 79h1v13h-1zM834 79h3v13h-3zM861 79h1v13h-1zM867 79h2v13h-2zM871 79h2v13h-2zM876 79h2v13h-2zM884 79h2v13h-2zM887 79h2v13h-2zM890 79h2v13h-2zM893 79h1v13h-1zM904 79h1v13h-1zM907 79h1v13h-1zM928 79h2v13h-2zM934 79h7v13h-7zM944 79h1v13h-1zM952 79h7v13h-7zM960 79h12v13h-12zM980 79h2v13h-2zM1016 79h2v13h-2zM1019 79h4v13h-4zM1027 79h1v13h-1zM1029 79h1v13h-1zM1031 79h1v13h-1zM263 85h2v1h-2zM304 85h3v1h-3zM382 85h2v1h-2zM416 85h10v1h-10zM456 85h1v1h-1zM591 85h7v1h-7zM768 85h7v1h-7zM959 85h1v1h-1z"/>
<path fill="#0540ff" d="M78 151h1v13h-1zM79 151h1v13h-1zM81 151h5v13h-5zM88 151h1v13h-1zM97 151h9v13h-9zM108 151h1v13h-1zM110 151h1v13h-1zM115 151h1v13h-1zM118 151h1v13h-1zM142 151h1v13h-1zM154 151h1v13h-1zM203 151h1v13h-1zM206 151h2v13h-2zM209 151h1v13h-1zM211 151h1v13h-1zM232 151h2v13h-2zM239 151h1v13h-1zM243 151h2v13h-2zM248 151h1v13h-1zM253 151h2v13h-2zM308 151h2v13h-2zM314 151h5v13h-5zM323 151h2v13h-2zM326 151h1v13h-1zM327 151h1v13h-1zM330 151h1v13h-1zM339 151h3v13h-3zM353 151h1v13h-1zM355 151h2v13h-2zM364 151h1v13h-1zM384 151h1v13h-1zM390 151h5v13h-5zM397 151h2v13h-2zM400 151h2v13h-2zM407 151h2v13h-2zM480 151h14v13h-14zM497 151h1v13h-1zM502 151h1v13h-1zM509 151h3v13h-3zM513 151h2v13h-2zM524 151h1v13h-1zM527 151h1v13h-1zM533 151h6v13h-6zM540 151h1v13h-1zM545 151h1v13h-1zM551 151h1v13h-1zM554 151h1v13h-1zM558 151h1v13h-1zM562 151h3v13h-3zM569 151h1v13h-1zM573 151h2v13h-2zM579 151h9v13h-9zM598 151h2v13h-2zM602 151h1v13h-1zM606 151h3v13h-3zM612 151h1v13h-1zM686 151h2v13h-2zM704 151h1v13h-1zM735 151h1v13h-1zM739 151h1v13h-1zM776 151h2v13h-2zM790 151h1v13h-1zM799 151h1v13h-1zM802 151h1v13h-1zM806 151h3v13h-3zM821 151h1v13h-1zM824 151h1v13h-1zM826 151h1v13h-1zM831 151h1v13h-1zM863 151h3v13h-3zM867 151h1v13h-1zM869 151h1v13h-1zM872 151h3v13h-3zM878 151h3v13h-3zM882 151h1v13h-1zM894 151h2v13h-2zM898 151h1v13h-1zM900 151h7v13h-7zM908 151h9v13h-9zM918 151h3v13h-3zM926 151h1v13h-1zM928 151h1v13h-1zM940 151h2v13h-2zM944 151h2v13h-2zM947 151h1v13h-1zM950 151h2v13h-2zM973 151h3v13h-3zM978 151h2v13h-2zM991 151h1v13h-1zM1009 151h2v13h-2zM1027 151h1v13h-1zM1029 151h1v13h-1zM78 157h3v1h-3zM204 157h2v1h-2zM208 157h4v1h-4zM539 157h5v1h-5zM602 157h4v1h-4zM609 157h3v1h-3zM976 157h2v1h-2z"/>
<path fill="#0540ff" d="M78 183h1v13h-1zM79 183h1v13h-1zM81 183h5v13h-5zM88 183h1v13h-1zM97 183h9v13h-9zM108 183h1v13h-1zM110 183h1v13h-1zM115 183h1v13h-1zM118 183h1v13h-1zM142 183h1v13h-1zM154 183h1v13h-1zM203 183h1v13h-1zM206 183h2v13h-2zM209 183h1v13h-1zM211 183h1v13h-1zM232 183h2v13h-2zM239 183h1v13h-1zM243 183h2v13h-2zM248 183h1v13h-1zM253 183h2v13h-2zM308 183h2v13h-2zM314 183h5v13h-5zM323 183h2v13h-2zM326 183h1v13h-1zM327 183h1v13h-1zM330 183h1v13h-1zM339 183h3v13h-3zM353 183h1v13h-1zM355 183h2v13h-2zM364 183h1v13h-1zM384 183h1v13h-1zM390 183h5v13h-5zM397 183h2v13h-2zM400 183h2v13h-2zM407 183h2v13h-2zM480 183h14v13h-14zM497 183h1v13h-1zM502 183h1v13h-1zM509 183h3v13h-3zM513 183h2v13h-2zM524 183h1v13h-1zM527 183h1v13h-1zM533 183h6v13h-6zM540 183h1v13h-1zM545 183h1v13h-1zM551 183h1v13h-1zM554 183h1v13h-1zM558 183h1v13h-1zM562 183h3v13h-3zM569 183h1v13h-1zM573 183h2v13h-2zM579 183h9v13h-9zM598 183h2v13h-2zM602 183h1v13h-1zM606 183h3v13h-3zM612 183h1v13h-1zM686 183h2v13h-2zM704 183h1v13h-1zM735 183h1v13h-1zM739 183h1v13h-1zM776 183h2v13h-2zM790 183h1v13h-1zM799 183h1v13h-1zM802 183h1v13h-1zM806 183h3v13h-3zM821 183h1v13h-1zM824 183h1v13h-1zM826 183h1v13h-1zM831 183h1v13h-1zM863 183h3v13h-3zM867 183h1v13h-1zM869 183h1v13h-1zM872 183h3v13h-3zM878 183h3v13h-3zM882 183h1v13h-1zM894 183h2v13h-2zM898 183h1v13h-1zM900 183h7v13h-7zM908 183h9v13h-9zM918 183h3v13h-3zM926 183h1v13h-1zM928 183h1v13h-1zM940 183h2v13h-2zM944 183h2v13h-2zM947 183h1v13h-1zM950 183h2v13h-2zM973 183h3v13h-3zM978 183h2v13h-2zM991 183h1v13h-1zM1009 183h2v13h-2zM1027 183h1v13h-1zM1029 183h1v13h-1zM78 189h3v1h-3zM204 189h2v1h-2zM208 189h4v1h-4zM539 189h5v1h-5zM602 189h4v1h-4zM609 189h3v1h-3zM976 189h2v1h-2z"/>
<path fill="#0540ff" d="M108 215h1v13h-1zM115 215h1v13h-1zM239 215h1v13h-1zM385 215h1v13h-1zM398 215h1v13h-1zM497 215h1v13h-1zM558 215h1v13h-1zM573 215h1v13h-1zM739 215h1v13h-1zM799 215h1v13h-1zM806 215h1v13h-1zM808 215h1v13h-1zM822 215h1v13h-1zM831 215h1v13h-1zM867 215h1v13h-1zM869 215h1v13h-1zM872 215h1v13h-1zM876 215h1v13h-1zM882 215h1v13h-1zM898 215h1v13h-1zM926 215h1v13h-1zM940 215h1v13h-1zM1027 215h1v13h-1zM1029 215h1v13h-1z"/>
<path fill="#0540ff" d="M108 247h1v13h-1zM115 247h1v13h-1zM239 247h1v13h-1zM385 247h1v13h-1zM398 247h1v13h-1zM497 247h1v13h-1zM558 247h1v13h-1zM573 247h1v13h-1zM739 247h1v13h-1zM799 247h1v13h-1zM806 247h1v13h-1zM808 247h1v13h-1zM822 247h1v13h-1zM831 247h1v13h-1zM867 247h1v13h-1zM869 247h1v13h-1zM872 247h1v13h-1zM876 247h1v13h-1zM882 247h1v13h-1zM898 247h1v13h-1zM926 247h1v13h-1zM940 247h1v13h-1zM1027 247h1v13h-1zM1029 247h1v13h-1z"/>
<path fill="#0540ff" d="M115 279h1v13h-1zM239 279h1v13h-1zM385 279h1v13h-1zM558 279h1v13h-1zM573 279h1v13h-1zM806 279h1v13h-1zM831 279h1v13h-1zM867 279h1v13h-1zM869 279h1v13h-1zM872 279h3v13h-3zM926 279h1v13h-1zM940 279h2v13h-2zM1029 279h1v13h-1z"/>
<path fill="#0540ff" d="M115 310h1v13h-1zM239 310h1v13h-1zM385 310h1v13h-1zM558 310h1v13h-1zM573 310h1v13h-1zM806 310h1v13h-1zM831 310h1v13h-1zM867 310h1v13h-1zM869 310h1v13h-1zM872 310h1v13h-1zM876 310h1v13h-1zM926 310h1v13h-1zM940 310h1v13h-1zM1029 310h1v13h-1z"/></svg>
<svg style="left:215px;top:174px" width="1035" height="340" viewBox="0 0 1035 340" shape-rendering="crispEdges"><rect x="0" y="121" width="1035" height="2" fill="#000"/><rect x="0" y="119" width="2" height="6" fill="#000"/><rect x="24" y="120" width="1" height="1" fill="#000"/><rect x="48" y="120" width="1" height="1" fill="#000"/><rect x="72" y="120" width="1" height="1" fill="#000"/><rect x="96" y="120" width="1" height="1" fill="#000"/><rect x="120" y="120" width="1" height="1" fill="#000"/><rect x="144" y="120" width="1" height="1" fill="#000"/><rect x="167" y="120" width="1" height="1" fill="#000"/><rect x="191" y="120" width="1" height="1" fill="#000"/><rect x="215" y="120" width="1" height="1" fill="#000"/><rect x="238" y="119" width="2" height="6" fill="#000"/><rect x="263" y="120" width="1" height="1" fill="#000"/><rect x="287" y="120" width="1" height="1" fill="#000"/><rect x="311" y="120" width="1" height="1" fill="#000"/><rect x="334" y="120" width="1" height="1" fill="#000"/><rect x="358" y="120" width="1" height="1" fill="#000"/><rect x="382" y="120" width="1" height="1" fill="#000"/><rect x="406" y="120" width="1" height="1" fill="#000"/><rect x="430" y="120" width="1" height="1" fill="#000"/><rect x="454" y="120" width="1" height="1" fill="#000"/><rect x="477" y="119" width="2" height="6" fill="#000"/><rect x="501" y="120" width="1" height="1" fill="#000"/><rect x="525" y="120" width="1" height="1" fill="#000"/><rect x="549" y="120" width="1" height="1" fill="#000"/><rect x="573" y="120" width="1" height="1" fill="#000"/><rect x="597" y="120" width="1" height="1" fill="#000"/><rect x="621" y="120" width="1" height="1" fill="#000"/><rect x="644" y="120" width="1" height="1" fill="#000"/><rect x="668" y="120" width="1" height="1" fill="#000"/><rect x="692" y="120" width="1" height="1" fill="#000"/><rect x="715" y="119" width="2" height="6" fill="#000"/><rect x="740" y="120" width="1" height="1" fill="#000"/><rect x="764" y="120" width="1" height="1" fill="#000"/><rect x="788" y="120" width="1" height="1" fill="#000"/><rect x="811" y="120" width="1" height="1" fill="#000"/><rect x="835" y="120" width="1" height="1" fill="#000"/><rect x="859" y="120" width="1" height="1" fill="#000"/><rect x="883" y="120" width="1" height="1" fill="#000"/><rect x="907" y="120" width="1" height="1" fill="#000"/><rect x="931" y="120" width="1" height="1" fill="#000"/><rect x="954" y="119" width="2" height="6" fill="#000"/><rect x="978" y="120" width="1" height="1" fill="#000"/><rect x="1002" y="120" width="1" height="1" fill="#000"/><rect x="1026" y="120" width="1" height="1" fill="#000"/></svg>
<span id="t18" class="t" style="left:215.4px;top:277.00px;font-size:11.5px;font-family:'DejaVu Sans Mono','Liberation Mono',monospace;color:#000;font-weight:bold;transform:scaleY(1.1);transform-origin:0 14px;">0</span>
<span id="t19" class="t" style="left:452.7px;top:277.50px;font-size:11.15px;font-family:'DejaVu Sans Mono','Liberation Mono',monospace;color:#000;font-weight:bold;letter-spacing:0.314px;transform:scaleY(1.1);transform-origin:0 14px;">10,000,000</span>
<span id="t20" class="t" style="left:691.1999999999999px;top:277.50px;font-size:11.15px;font-family:'DejaVu Sans Mono','Liberation Mono',monospace;color:#000;font-weight:bold;letter-spacing:0.314px;transform:scaleY(1.1);transform-origin:0 14px;">20,000,000</span>
<span id="t21" class="t" style="left:929.6999999999999px;top:277.50px;font-size:11.15px;font-family:'DejaVu Sans Mono','Liberation Mono',monospace;color:#000;font-weight:bold;letter-spacing:0.314px;transform:scaleY(1.1);transform-origin:0 14px;">30,000,000</span>
<span id="t22" class="t" style="left:1168.2px;top:277.50px;font-size:11.15px;font-family:'DejaVu Sans Mono','Liberation Mono',monospace;color:#000;font-weight:bold;letter-spacing:0.314px;transform:scaleY(1.1);transform-origin:0 14px;">40,000,000</span>
<div style="left:824px;top:174px;width:1px;height:340px;background:#c4c4c4;"></div>
<div style="left:789px;top:486px;width:72px;height:13px;background:#c0c0c0;"></div>
<span id="t23" class="t" style="left:790.3px;top:484.50px;font-size:11.15px;font-family:'DejaVu Sans','Liberation Sans',sans-serif;color:#000;-webkit-text-stroke:0.3px;letter-spacing:0.680px;">25,567,987</span>
<span id="t24" class="t" style="left:1168px;top:231.80px;font-size:8.24px;font-family:'DejaVu Sans Mono','Liberation Mono',monospace;color:#1a50ff;font-weight:bold;letter-spacing:0.151px;">g1…</span>
<div style="left:107px;top:515px;width:1146px;height:15px;background:#fafafa;"></div>
<div style="left:108px;top:519.5px;width:256px;height:8.5px;background:#c1c1c1;border-radius:4.25px;"></div>
<div style="left:78px;top:530px;width:1190px;height:9px;background:#fdfdfd;"></div>
<div style="left:669px;top:532px;width:5px;height:5px;background:#dcdcdc;border-radius:50%;"></div>
<div style="left:86px;top:556px;width:1172px;height:211px;background:#e5e5e5;border-radius:6px;"></div>
<div style="left:247px;top:543px;width:851px;height:21px;background:#dedede;border-radius:6px;box-shadow:0 0 0 0.5px rgba(0,0,0,0.08);"></div>
<div style="left:288px;top:544.5px;width:97px;height:19px;background:#fff;border-radius:5px;box-shadow:0 0 1.5px rgba(0,0,0,0.35);"></div>
<svg style="left:258px;top:548px" width="16" height="12" viewBox="0 0 16 12" ><path d="M2.2 1.8 L8 7.6 L13.8 1.8" fill="none" stroke="#3b97cf" stroke-width="3" stroke-linecap="butt" stroke-linejoin="miter"/><path d="M4 11.3 H12" stroke="#bdbdbd" stroke-width="1"/></svg>
<span id="t25" class="t" style="left:299.4px;top:544.00px;font-size:12.3px;font-family:'DejaVu Sans','Liberation Sans',sans-serif;color:#000;-webkit-text-stroke:0.3px;">Data Access</span>
<span id="t26" class="t" style="left:399.4px;top:543.50px;font-size:12.51px;font-family:'DejaVu Sans','Liberation Sans',sans-serif;color:#000;-webkit-text-stroke:0.3px;">Annotation</span>
<span id="t27" class="t" style="left:491.8px;top:544.00px;font-size:12.09px;font-family:'DejaVu Sans','Liberation Sans',sans-serif;color:#000;-webkit-text-stroke:0.3px;letter-spacing:-0.150px;">Graph</span>
<span id="t28" class="t" style="left:552px;top:544.00px;font-size:12.11px;font-family:'DejaVu Sans','Liberation Sans',sans-serif;color:#000;-webkit-text-stroke:0.3px;">Advanced Search</span>
<span id="t29" class="t" style="left:681px;top:543.50px;font-size:12.61px;font-family:'DejaVu Sans','Liberation Sans',sans-serif;color:#000;-webkit-text-stroke:0.3px;">Selection Info</span>
<span id="t30" class="t" style="left:790px;top:544.00px;font-size:12.27px;font-family:'DejaVu Sans','Liberation Sans',sans-serif;color:#000;-webkit-text-stroke:0.3px;">Sliced View</span>
<span id="t31" class="t" style="left:883px;top:543.50px;font-size:12.48px;font-family:'DejaVu Sans','Liberation Sans',sans-serif;color:#000;-webkit-text-stroke:0.3px;">Log</span>
<span id="t32" class="t" style="left:929px;top:544.00px;font-size:12.28px;font-family:'DejaVu Sans','Liberation Sans',sans-serif;color:#000;-webkit-text-stroke:0.3px;">External View</span>
<span id="t33" class="t" style="left:1036px;top:543.50px;font-size:12.61px;font-family:'DejaVu Sans','Liberation Sans',sans-serif;color:#000;-webkit-text-stroke:0.3px;letter-spacing:0.439px;">Plug-ins</span>
<div style="left:480px;top:548px;width:1px;height:11px;background:#c2c2c2;"></div>
<div style="left:539.5px;top:548px;width:1px;height:11px;background:#c2c2c2;"></div>
<div style="left:668.5px;top:548px;width:1px;height:11px;background:#c2c2c2;"></div>
<div style="left:778px;top:548px;width:1px;height:11px;background:#c2c2c2;"></div>
<div style="left:871px;top:548px;width:1px;height:11px;background:#c2c2c2;"></div>
<div style="left:916.5px;top:548px;width:1px;height:11px;background:#c2c2c2;"></div>
<div style="left:1024px;top:548px;width:1px;height:11px;background:#c2c2c2;"></div>
<div style="left:89px;top:573px;width:1168px;height:192px;border:1px solid #808080;background:#eeeeee;box-shadow:inset 0 0 0 1px #fff;"></div>
<div style="left:94px;top:582px;width:262px;height:179px;border:1px solid #a8a8a8;box-shadow:inset 0 0 0 1px #fafafa;"></div>
<div style="left:98px;top:574px;width:176px;height:16px;background:#eeeeee;"></div>
<span id="t34" class="t" style="left:100px;top:574.00px;font-size:12.55px;font-family:'DejaVu Sans','Liberation Sans',sans-serif;color:#000;-webkit-text-stroke:0.3px;">Available Data – </span>
<span id="t35" class="t" style="left:205px;top:574.00px;font-size:12.61px;font-family:'DejaVu Sans Condensed','DejaVu Sans',sans-serif;color:#0a22e0;font-weight:bold;letter-spacing:0.549px;text-decoration:underline;">Configure</span>
<div style="left:97px;top:596px;width:256px;height:161px;border:1px solid #8e8e8e;background:#fff;"></div>
<div style="left:336px;top:597px;width:16px;height:145px;background:#fafafa;"></div>
<div style="left:98px;top:742px;width:254px;height:14px;background:#fafafa;"></div>
<div style="left:340px;top:673px;width:8px;height:19px;background:#c1c1c1;border-radius:4px;"></div>
<div style="left:100px;top:745px;width:121px;height:8px;background:#c1c1c1;border-radius:4px;"></div>
<div style="left:161px;top:655px;width:175px;height:19px;background:#0b4fd7;"></div>
<svg style="left:141px;top:600px" width="17" height="15" viewBox="0 0 17 15" ><path d="M1 2.2 Q1 1 2.2 1 H6 L7.6 2.4 H14.8 Q16 2.4 16 3.6 V12.8 Q16 14 14.8 14 H2.2 Q1 14 1 12.8 Z" fill="#3a9fe6"/><path d="M1 4.6 H16 V12.8 Q16 14 14.8 14 H2.2 Q1 14 1 12.8 Z" fill="#6dc5f8"/><path d="M1.2 13.8 H15.8" stroke="#4aa6e0" stroke-width="0.7"/></svg>
<span id="t36" class="t" style="left:161.3px;top:598.50px;font-size:11.16px;font-family:'DejaVu Sans','Liberation Sans',sans-serif;color:#000;-webkit-text-stroke:0.3px;letter-spacing:-0.077px;">bigBed</span>
<svg style="left:125px;top:602px" width="9" height="11" viewBox="0 0 9 11" ><path d="M2.4 1.8 L6.4 5.4 L2.4 9" fill="none" stroke="#b2b2b2" stroke-width="1.3" stroke-linecap="round" stroke-linejoin="round"/></svg>
<svg style="left:141px;top:619px" width="17" height="15" viewBox="0 0 17 15" ><path d="M1 2.2 Q1 1 2.2 1 H6 L7.6 2.4 H14.8 Q16 2.4 16 3.6 V12.8 Q16 14 14.8 14 H2.2 Q1 14 1 12.8 Z" fill="#3a9fe6"/><path d="M1 4.6 H16 V12.8 Q16 14 14.8 14 H2.2 Q1 14 1 12.8 Z" fill="#6dc5f8"/><path d="M1.2 13.8 H15.8" stroke="#4aa6e0" stroke-width="0.7"/></svg>
<span id="t37" class="t" style="left:161.3px;top:617.50px;font-size:11.16px;font-family:'DejaVu Sans','Liberation Sans',sans-serif;color:#000;-webkit-text-stroke:0.3px;letter-spacing:-0.049px;">bigWig</span>
<svg style="left:125px;top:621px" width="9" height="11" viewBox="0 0 9 11" ><path d="M2.4 1.8 L6.4 5.4 L2.4 9" fill="none" stroke="#b2b2b2" stroke-width="1.3" stroke-linecap="round" stroke-linejoin="round"/></svg>
<svg style="left:141px;top:638px" width="17" height="15" viewBox="0 0 17 15" ><path d="M1 2.4 Q1 1.2 2.2 1.2 H5.8 L7.4 3 H14.8 Q16 3 16 4.2 V12.8 Q16 14 14.8 14 H2.2 Q1 14 1 12.8 Z" fill="#a9dcfb"/><path d="M1 7 H16 V12.8 Q16 14 14.8 14 H2.2 Q1 14 1 12.8 Z" fill="#63b4ea"/><path d="M1 7.3 H16" stroke="#8fcdf5" stroke-width="0.8"/></svg>
<span id="t38" class="t" style="left:161.3px;top:636.00px;font-size:11.43px;font-family:'DejaVu Sans','Liberation Sans',sans-serif;color:#000;-webkit-text-stroke:0.3px;">genePred</span>
<svg style="left:123px;top:641px" width="11" height="9" viewBox="0 0 11 9" ><path d="M1.8 2.8 L5.4 6.4 L9 2.8" fill="none" stroke="#b2b2b2" stroke-width="1.3" stroke-linecap="round" stroke-linejoin="round"/></svg>
<div style="left:163px;top:657.5px;width:14px;height:14px;background:linear-gradient(#3f8dff,#1468fa);border-radius:3.5px;"></div>
<svg style="left:163px;top:657.5px" width="14" height="14" viewBox="0 0 14 14" ><path d="M3.4 7.4 L6 10.4 L10.6 3.6" fill="none" stroke="#fff" stroke-width="1.9" stroke-linecap="round" stroke-linejoin="round"/></svg>
<div style="left:163px;top:676.5px;width:14px;height:14px;background:#fff;border:1px solid #c4c4c4;border-radius:3.5px;"></div>
<div style="left:163px;top:695.5px;width:14px;height:14px;background:#fff;border:1px solid #c4c4c4;border-radius:3.5px;"></div>
<div style="left:163px;top:714.5px;width:14px;height:14px;background:#fff;border:1px solid #c4c4c4;border-radius:3.5px;"></div>
<div style="left:163px;top:733.5px;width:14px;height:7.5px;background:#fff;border:1px solid #c4c4c4;border-radius:3.5px;border-bottom:none;border-radius:3.5px 3.5px 0 0;"></div>
<div style="left:98px;top:597px;width:238px;height:144px;overflow:hidden;">
<span id="t39" class="t" style="left:85px;top:58.50px;font-size:11.19px;font-family:'DejaVu Sans','Liberation Sans',sans-serif;color:#fff;-webkit-text-stroke:0.3px;">AUGUSTUS (augustusGene)</span>
<span id="t40" class="t" style="left:85px;top:77.50px;font-size:11.26px;font-family:'DejaVu Sans','Liberation Sans',sans-serif;color:#000;-webkit-text-stroke:0.3px;">Genscan Genes (genscan)</span>
<span id="t41" class="t" style="left:85px;top:96.00px;font-size:11.33px;font-family:'DejaVu Sans','Liberation Sans',sans-serif;color:#000;-webkit-text-stroke:0.3px;">RefSeq Select (ncbiRefSeqSelect)</span>
<span id="t42" class="t" style="left:85px;top:115.50px;font-size:11.29px;font-family:'DejaVu Sans','Liberation Sans',sans-serif;color:#000;-webkit-text-stroke:0.3px;">UCSC RefSeq (refGene)</span>
<span id="t43" class="t" style="left:85px;top:134.50px;font-size:11.25px;font-family:'DejaVu Sans','Liberation Sans',sans-serif;color:#000;-webkit-text-stroke:0.3px;">RefSeq Predicted (ncbiRefSeqPredicted)</span>
</div>
<div style="left:359px;top:664px;width:6px;height:8px;background:#e6e6e6;border:1px solid #d4d4d4;"></div>
<div style="left:360.5px;top:666px;width:3.5px;height:3.5px;background:#fff;border-radius:50%;"></div>
<div style="left:370px;top:582px;width:882px;height:179px;border:1px solid #a8a8a8;box-shadow:inset 0 0 0 1px #fafafa;"></div>
<div style="left:375px;top:574px;width:155px;height:16px;background:#eeeeee;"></div>
<span id="t44" class="t" style="left:377.5px;top:572.60px;font-size:12.3px;font-family:'DejaVu Sans','Liberation Sans',sans-serif;color:#000;-webkit-text-stroke:0.3px;">Data Management Table</span>
<div style="left:374px;top:592px;width:874px;height:165px;border:1px solid #9a9a9a;background:#fff;overflow:hidden;"></div>
<div style="left:375px;top:593px;width:872px;height:16px;background:linear-gradient(#fdfdfd,#f3f3f3 50%,#e9e9e9);"></div>
<div style="left:375px;top:609px;width:872px;height:1.2px;background:#000;"></div>
<div style="left:395px;top:593px;width:1px;height:163px;background:#b4b4b4;"></div>
<div style="left:420px;top:593px;width:1px;height:163px;background:#b4b4b4;"></div>
<div style="left:447px;top:593px;width:1px;height:163px;background:#b4b4b4;"></div>
<div style="left:475px;top:593px;width:1px;height:163px;background:#b4b4b4;"></div>
<div style="left:510px;top:593px;width:1px;height:163px;background:#b4b4b4;"></div>
<div style="left:630px;top:593px;width:1px;height:163px;background:#b4b4b4;"></div>
<div style="left:1231px;top:593px;width:1px;height:163px;background:#b4b4b4;"></div>
<div style="left:375px;top:630.0px;width:872px;height:1px;background:#b4b4b4;"></div>
<div style="left:375px;top:650.15px;width:872px;height:1px;background:#b4b4b4;"></div>
<div style="left:375px;top:670.3px;width:872px;height:1px;background:#b4b4b4;"></div>
<div style="left:375px;top:690.45px;width:872px;height:1px;background:#b4b4b4;"></div>
<div style="left:375px;top:710.6px;width:872px;height:1px;background:#b4b4b4;"></div>
<div style="left:375px;top:730.75px;width:872px;height:1px;background:#b4b4b4;"></div>
<div style="left:375px;top:750.9px;width:872px;height:1px;background:#b4b4b4;"></div>
<span id="t45" class="t" style="left:424.5px;top:591.50px;font-size:11.64px;font-family:'DejaVu Sans Condensed','DejaVu Sans',sans-serif;color:#000;font-weight:bold;letter-spacing:0.738px;">FG</span>
<span id="t46" class="t" style="left:452.5px;top:591.50px;font-size:11.64px;font-family:'DejaVu Sans Condensed','DejaVu Sans',sans-serif;color:#000;font-weight:bold;letter-spacing:0.419px;">BG</span>
<span id="t47" class="t" style="left:481.5px;top:591.50px;font-size:11.64px;font-family:'DejaVu Sans Condensed','DejaVu Sans',sans-serif;color:#000;font-weight:bold;letter-spacing:1.307px;">+/−</span>
<span id="t48" class="t" style="left:537.5px;top:591.50px;font-size:11.64px;font-family:'DejaVu Sans Condensed','DejaVu Sans',sans-serif;color:#000;font-weight:bold;letter-spacing:0.338px;">Load Mode</span>
<span id="t49" class="t" style="left:895.5px;top:591.50px;font-size:11.64px;font-family:'DejaVu Sans Condensed','DejaVu Sans',sans-serif;color:#000;font-weight:bold;letter-spacing:0.360px;">Track Name</span>
<div style="left:421px;top:612px;width:24px;height:17px;background:#0540ff;"></div>
<div style="left:486px;top:613.5px;width:13px;height:13px;background:#fff;border:1px solid #c8c8c8;border-radius:3.5px;"></div>
<span id="t50" class="t" style="left:519.2px;top:612.00px;font-size:11.64px;font-family:'DejaVu Sans','Liberation Sans',sans-serif;color:#000;-webkit-text-stroke:0.3px;letter-spacing:0.340px;">Manual</span>
<svg style="left:565px;top:615px" width="8" height="13" viewBox="0 0 8 13" ><path d="M1.5 5 L4 2.2 L6.5 5 M1.5 8 L4 10.8 L6.5 8" fill="none" stroke="#222" stroke-width="1.2" stroke-linecap="round" stroke-linejoin="round"/></svg>
<span id="t51" class="t" style="left:638px;top:612.00px;font-size:11.64px;font-family:'DejaVu Sans','Liberation Sans',sans-serif;color:#1e50f0;-webkit-text-stroke:0.3px;letter-spacing:0.412px;">augustusGene</span>
<svg style="left:1233px;top:614px" width="12" height="12" viewBox="0 0 12 12" ><path d="M1.5 1.5 L10.5 10.5 M10.5 1.5 L1.5 10.5" stroke="#d23a3a" stroke-width="1.6" stroke-linecap="round"/></svg>
<svg style="left:378px;top:613px" width="14" height="15" viewBox="0 0 14 15" ><path d="M2 6.5 C2.5 3.5 5.5 2.2 8 3.4 L8 1.2 L12 4.6 L8 7.6 L8 5.6 C6 4.8 4.4 5.4 3.6 7 Z" fill="#2f79d8"/><path d="M12 8 C11.5 11 8.5 12.3 6 11.1 L6 13.3 L2 9.9 L6 6.9 L6 8.9 C8 9.7 9.6 9.1 10.4 7.5 Z" fill="#2f79d8"/></svg>
<svg style="left:398px;top:613px" width="17" height="13" viewBox="0 0 17 13" ><path d="M1 6.5 Q8.5 -1 16 6.5 Q8.5 13 1 6.5 Z" fill="#f2f2f2" stroke="#777" stroke-width="1"/><path d="M1 6 Q8.5 -1.5 16 6" fill="none" stroke="#222" stroke-width="1.6"/><circle cx="8.5" cy="6.3" r="3.4" fill="#111"/><circle cx="7.4" cy="5.2" r="1.1" fill="#fff"/></svg>
<div style="left:1272px;top:456px;width:6px;height:8px;background:#e6e6e6;border:1px solid #d8d8d8;"></div>
<div style="left:1273.5px;top:458px;width:3.5px;height:3.5px;background:#fff;border-radius:50%;"></div>
<div style="left:1287px;top:143px;width:158px;height:629px;background:#e6e6e6;border-radius:7px;"></div>
<div style="left:1292px;top:146px;width:138px;height:625px;background:#eeeeee;"></div>
<div style="left:1294px;top:154px;width:133px;height:44px;border:1px solid #a8a8a8;box-shadow:inset 0 0 0 1px #f8f8f8, 1px 1px 0 #f8f8f8;"></div>
<div style="left:1301px;top:148px;width:58px;height:14px;background:#eeeeee;"></div>
<span id="t52" class="t" style="left:1305px;top:145.90px;font-size:12.61px;font-family:'DejaVu Sans Condensed','DejaVu Sans',sans-serif;color:#0a22e0;font-weight:bold;letter-spacing:0.157px;text-decoration:underline;">Species</span>
<div style="left:1294px;top:214px;width:133px;height:41px;border:1px solid #a8a8a8;box-shadow:inset 0 0 0 1px #f8f8f8, 1px 1px 0 #f8f8f8;"></div>
<div style="left:1299px;top:208px;width:106px;height:14px;background:#eeeeee;"></div>
<span id="t53" class="t" style="left:1301.2px;top:205.50px;font-size:12.33px;font-family:'DejaVu Sans','Liberation Sans',sans-serif;color:#000;-webkit-text-stroke:0.3px;">Genome Version</span>
<div style="left:1303px;top:170px;width:115px;height:20px;background:#fff;border-radius:5px;box-shadow:0 0 0 0.5px rgba(0,0,0,0.15),0 0.5px 1.5px rgba(0,0,0,0.3);"></div>
<div style="left:1400px;top:172px;width:16px;height:16px;background:linear-gradient(#3d94ff,#0a6cf5);border-radius:4px;"></div>
<svg style="left:1400px;top:172px" width="16" height="16" viewBox="0 0 16 16" ><path d="M5 6.4 L8 3.4 L11 6.4 M5 9.6 L8 12.6 L11 9.6" fill="none" stroke="#fff" stroke-width="1.5" stroke-linecap="round" stroke-linejoin="round"/></svg>
<span id="t54" class="t" style="left:1311px;top:170.10px;font-size:12.57px;font-family:'DejaVu Sans','Liberation Sans',sans-serif;color:#000;-webkit-text-stroke:0.3px;">Mus muscu...</span>
<div style="left:1303px;top:227px;width:115px;height:20px;background:#fff;border-radius:5px;box-shadow:0 0 0 0.5px rgba(0,0,0,0.15),0 0.5px 1.5px rgba(0,0,0,0.3);"></div>
<div style="left:1400px;top:229px;width:16px;height:16px;background:linear-gradient(#3d94ff,#0a6cf5);border-radius:4px;"></div>
<svg style="left:1400px;top:229px" width="16" height="16" viewBox="0 0 16 16" ><path d="M5 6.4 L8 3.4 L11 6.4 M5 9.6 L8 12.6 L11 9.6" fill="none" stroke="#fff" stroke-width="1.5" stroke-linecap="round" stroke-linejoin="round"/></svg>
<span id="t55" class="t" style="left:1311px;top:227.10px;font-size:12.61px;font-family:'DejaVu Sans','Liberation Sans',sans-serif;color:#000;-webkit-text-stroke:0.3px;letter-spacing:0.047px;">M_musculu...</span>
<div style="left:1292px;top:264px;width:138px;height:507px;background:#eeeeee;border:1px solid #9a9a9a;border-bottom:none;overflow:hidden;"></div>
<div style="left:1293px;top:265px;width:136px;height:17px;background:linear-gradient(#fdfdfd,#f3f3f3 50%,#e9e9e9);"></div>
<div style="left:1293px;top:282px;width:136px;height:1.5px;background:#000;"></div>
<div style="left:1353px;top:265px;width:1px;height:506px;background:#b4b4b4;"></div>
<div style="left:1412px;top:265px;width:1px;height:506px;background:#b4b4b4;"></div>
<span id="t56" class="t" style="left:1299px;top:264.50px;font-size:11.16px;font-family:'DejaVu Sans Condensed','DejaVu Sans',sans-serif;color:#000;font-weight:bold;letter-spacing:-0.126px;">(61) Se...</span>
<span id="t57" class="t" style="left:1362.5px;top:264.00px;font-size:11.64px;font-family:'DejaVu Sans Condensed','DejaVu Sans',sans-serif;color:#000;font-weight:bold;letter-spacing:0.161px;">Length</span>
<div style="left:1293px;top:283px;width:136px;height:488px;overflow:hidden;">
<div style="left:0;top:0px;width:119px;height:19px;background:#0b4fd7;"></div>
<div style="left:0;top:19px;width:120px;height:1px;background:#b4b4b4;"></div>
<span id="t58" class="t" style="left:18.0px;top:0.50px;font-size:11.16px;font-family:'DejaVu Sans','Liberation Sans',sans-serif;color:#fff;-webkit-text-stroke:0.3px;letter-spacing:-0.302px;">chr1</span>
<span id="t59" class="t" style="left:64.25px;top:0.00px;font-size:11.64px;font-family:'DejaVu Sans','Liberation Sans',sans-serif;color:#fff;-webkit-text-stroke:0.3px;letter-spacing:0.338px;">19515...</span>
<div style="left:0;top:39px;width:120px;height:1px;background:#b4b4b4;"></div>
<span id="t60" class="t" style="left:18.0px;top:20.50px;font-size:11.16px;font-family:'DejaVu Sans','Liberation Sans',sans-serif;color:#000;-webkit-text-stroke:0.3px;letter-spacing:-0.302px;">chr2</span>
<span id="t61" class="t" style="left:64.25px;top:20.00px;font-size:11.64px;font-family:'DejaVu Sans','Liberation Sans',sans-serif;color:#000;-webkit-text-stroke:0.3px;letter-spacing:0.338px;">18175...</span>
<div style="left:0;top:59px;width:120px;height:1px;background:#b4b4b4;"></div>
<span id="t62" class="t" style="left:18.0px;top:40.50px;font-size:11.16px;font-family:'DejaVu Sans','Liberation Sans',sans-serif;color:#000;-webkit-text-stroke:0.3px;letter-spacing:-0.302px;">chr3</span>
<span id="t63" class="t" style="left:64.25px;top:40.00px;font-size:11.64px;font-family:'DejaVu Sans','Liberation Sans',sans-serif;color:#000;-webkit-text-stroke:0.3px;letter-spacing:0.338px;">15974...</span>
<div style="left:0;top:79px;width:120px;height:1px;background:#b4b4b4;"></div>
<span id="t64" class="t" style="left:18.0px;top:60.50px;font-size:11.16px;font-family:'DejaVu Sans','Liberation Sans',sans-serif;color:#000;-webkit-text-stroke:0.3px;letter-spacing:-0.302px;">chr4</span>
<span id="t65" class="t" style="left:64.25px;top:60.00px;font-size:11.64px;font-family:'DejaVu Sans','Liberation Sans',sans-serif;color:#000;-webkit-text-stroke:0.3px;letter-spacing:0.338px;">15686...</span>
<div style="left:0;top:99px;width:120px;height:1px;background:#b4b4b4;"></div>
<span id="t66" class="t" style="left:18.0px;top:80.50px;font-size:11.16px;font-family:'DejaVu Sans','Liberation Sans',sans-serif;color:#000;-webkit-text-stroke:0.3px;letter-spacing:-0.302px;">chr5</span>
<span id="t67" class="t" style="left:64.25px;top:80.00px;font-size:11.64px;font-family:'DejaVu Sans','Liberation Sans',sans-serif;color:#000;-webkit-text-stroke:0.3px;letter-spacing:0.338px;">15175...</span>
<div style="left:0;top:119px;width:120px;height:1px;background:#b4b4b4;"></div>
<span id="t68" class="t" style="left:18.0px;top:100.50px;font-size:11.16px;font-family:'DejaVu Sans','Liberation Sans',sans-serif;color:#000;-webkit-text-stroke:0.3px;letter-spacing:-0.302px;">chr6</span>
<span id="t69" class="t" style="left:64.25px;top:100.00px;font-size:11.64px;font-family:'DejaVu Sans','Liberation Sans',sans-serif;color:#000;-webkit-text-stroke:0.3px;letter-spacing:0.338px;">14958...</span>
<div style="left:0;top:139px;width:120px;height:1px;background:#b4b4b4;"></div>
<span id="t70" class="t" style="left:18.0px;top:120.50px;font-size:11.16px;font-family:'DejaVu Sans','Liberation Sans',sans-serif;color:#000;-webkit-text-stroke:0.3px;letter-spacing:-0.302px;">chr7</span>
<span id="t71" class="t" style="left:64.25px;top:120.00px;font-size:11.64px;font-family:'DejaVu Sans','Liberation Sans',sans-serif;color:#000;-webkit-text-stroke:0.3px;letter-spacing:0.338px;">14499...</span>
<div style="left:0;top:159px;width:120px;height:1px;background:#b4b4b4;"></div>
<span id="t72" class="t" style="left:18.0px;top:140.50px;font-size:11.16px;font-family:'DejaVu Sans','Liberation Sans',sans-serif;color:#000;-webkit-text-stroke:0.3px;letter-spacing:-0.302px;">chr8</span>
<span id="t73" class="t" style="left:64.25px;top:140.00px;font-size:11.64px;font-family:'DejaVu Sans','Liberation Sans',sans-serif;color:#000;-webkit-text-stroke:0.3px;letter-spacing:0.338px;">13012...</span>
<div style="left:0;top:179px;width:120px;height:1px;background:#b4b4b4;"></div>
<span id="t74" class="t" style="left:18.0px;top:160.50px;font-size:11.16px;font-family:'DejaVu Sans','Liberation Sans',sans-serif;color:#000;-webkit-text-stroke:0.3px;letter-spacing:-0.302px;">chr9</span>
<span id="t75" class="t" style="left:64.25px;top:160.00px;font-size:11.64px;font-family:'DejaVu Sans','Liberation Sans',sans-serif;color:#000;-webkit-text-stroke:0.3px;letter-spacing:0.338px;">12435...</span>
<div style="left:0;top:199px;width:120px;height:1px;background:#b4b4b4;"></div>
<span id="t76" class="t" style="left:13.5px;top:180.00px;font-size:11.51px;font-family:'DejaVu Sans','Liberation Sans',sans-serif;color:#000;-webkit-text-stroke:0.3px;">chr10</span>
<span id="t77" class="t" style="left:64.25px;top:180.00px;font-size:11.64px;font-family:'DejaVu Sans','Liberation Sans',sans-serif;color:#000;-webkit-text-stroke:0.3px;letter-spacing:0.338px;">13053...</span>
<div style="left:0;top:219px;width:120px;height:1px;background:#b4b4b4;"></div>
<span id="t78" class="t" style="left:13.5px;top:200.00px;font-size:11.51px;font-family:'DejaVu Sans','Liberation Sans',sans-serif;color:#000;-webkit-text-stroke:0.3px;">chr11</span>
<span id="t79" class="t" style="left:64.25px;top:200.00px;font-size:11.64px;font-family:'DejaVu Sans','Liberation Sans',sans-serif;color:#000;-webkit-text-stroke:0.3px;letter-spacing:0.338px;">12197...</span>
<div style="left:0;top:239px;width:120px;height:1px;background:#b4b4b4;"></div>
<span id="t80" class="t" style="left:13.5px;top:220.00px;font-size:11.51px;font-family:'DejaVu Sans','Liberation Sans',sans-serif;color:#000;-webkit-text-stroke:0.3px;">chr12</span>
<span id="t81" class="t" style="left:64.25px;top:220.00px;font-size:11.64px;font-family:'DejaVu Sans','Liberation Sans',sans-serif;color:#000;-webkit-text-stroke:0.3px;letter-spacing:0.338px;">12009...</span>
<div style="left:0;top:259px;width:120px;height:1px;background:#b4b4b4;"></div>
<span id="t82" class="t" style="left:13.5px;top:240.00px;font-size:11.51px;font-family:'DejaVu Sans','Liberation Sans',sans-serif;color:#000;-webkit-text-stroke:0.3px;">chr13</span>
<span id="t83" class="t" style="left:64.25px;top:240.00px;font-size:11.64px;font-family:'DejaVu Sans','Liberation Sans',sans-serif;color:#000;-webkit-text-stroke:0.3px;letter-spacing:0.338px;">12088...</span>
<div style="left:0;top:279px;width:120px;height:1px;background:#b4b4b4;"></div>
<span id="t84" class="t" style="left:13.5px;top:260.00px;font-size:11.51px;font-family:'DejaVu Sans','Liberation Sans',sans-serif;color:#000;-webkit-text-stroke:0.3px;">chr14</span>
<span id="t85" class="t" style="left:64.25px;top:260.00px;font-size:11.64px;font-family:'DejaVu Sans','Liberation Sans',sans-serif;color:#000;-webkit-text-stroke:0.3px;letter-spacing:0.338px;">12513...</span>
<div style="left:0;top:299px;width:120px;height:1px;background:#b4b4b4;"></div>
<span id="t86" class="t" style="left:13.5px;top:280.00px;font-size:11.51px;font-family:'DejaVu Sans','Liberation Sans',sans-serif;color:#000;-webkit-text-stroke:0.3px;">chr15</span>
<span id="t87" class="t" style="left:64.25px;top:280.00px;font-size:11.64px;font-family:'DejaVu Sans','Liberation Sans',sans-serif;color:#000;-webkit-text-stroke:0.3px;letter-spacing:0.338px;">10407...</span>
<div style="left:0;top:319px;width:120px;height:1px;background:#b4b4b4;"></div>
<span id="t88" class="t" style="left:13.5px;top:300.00px;font-size:11.51px;font-family:'DejaVu Sans','Liberation Sans',sans-serif;color:#000;-webkit-text-stroke:0.3px;">chr16</span>
<span id="t89" class="t" style="left:64.25px;top:300.00px;font-size:11.64px;font-family:'DejaVu Sans','Liberation Sans',sans-serif;color:#000;-webkit-text-stroke:0.3px;letter-spacing:0.338px;">98008...</span>
<div style="left:0;top:339px;width:120px;height:1px;background:#b4b4b4;"></div>
<span id="t90" class="t" style="left:13.5px;top:320.00px;font-size:11.51px;font-family:'DejaVu Sans','Liberation Sans',sans-serif;color:#000;-webkit-text-stroke:0.3px;">chr17</span>
<span id="t91" class="t" style="left:64.25px;top:320.00px;font-size:11.64px;font-family:'DejaVu Sans','Liberation Sans',sans-serif;color:#000;-webkit-text-stroke:0.3px;letter-spacing:0.338px;">95294...</span>
<div style="left:0;top:359px;width:120px;height:1px;background:#b4b4b4;"></div>
<span id="t92" class="t" style="left:13.5px;top:340.00px;font-size:11.51px;font-family:'DejaVu Sans','Liberation Sans',sans-serif;color:#000;-webkit-text-stroke:0.3px;">chr18</span>
<span id="t93" class="t" style="left:64.25px;top:340.00px;font-size:11.64px;font-family:'DejaVu Sans','Liberation Sans',sans-serif;color:#000;-webkit-text-stroke:0.3px;letter-spacing:0.338px;">90720...</span>
<div style="left:0;top:379px;width:120px;height:1px;background:#b4b4b4;"></div>
<span id="t94" class="t" style="left:13.5px;top:360.00px;font-size:11.51px;font-family:'DejaVu Sans','Liberation Sans',sans-serif;color:#000;-webkit-text-stroke:0.3px;">chr19</span>
<span id="t95" class="t" style="left:64.25px;top:360.00px;font-size:11.64px;font-family:'DejaVu Sans','Liberation Sans',sans-serif;color:#000;-webkit-text-stroke:0.3px;letter-spacing:0.338px;">61420...</span>
<div style="left:0;top:399px;width:120px;height:1px;background:#b4b4b4;"></div>
<span id="t96" class="t" style="left:17.5px;top:380.50px;font-size:11.16px;font-family:'DejaVu Sans','Liberation Sans',sans-serif;color:#000;-webkit-text-stroke:0.3px;letter-spacing:-0.148px;">chrX</span>
<span id="t97" class="t" style="left:64.25px;top:380.00px;font-size:11.64px;font-family:'DejaVu Sans','Liberation Sans',sans-serif;color:#000;-webkit-text-stroke:0.3px;letter-spacing:0.338px;">16947...</span>
<div style="left:0;top:419px;width:120px;height:1px;background:#b4b4b4;"></div>
<span id="t98" class="t" style="left:17.8px;top:400.50px;font-size:11.16px;font-family:'DejaVu Sans','Liberation Sans',sans-serif;color:#000;-webkit-text-stroke:0.3px;letter-spacing:-0.072px;">chrY</span>
<span id="t99" class="t" style="left:64.25px;top:400.00px;font-size:11.64px;font-family:'DejaVu Sans','Liberation Sans',sans-serif;color:#000;-webkit-text-stroke:0.3px;letter-spacing:0.338px;">91455...</span>
<div style="left:0;top:439px;width:120px;height:1px;background:#b4b4b4;"></div>
<span id="t100" class="t" style="left:16.2px;top:420.50px;font-size:11.23px;font-family:'DejaVu Sans','Liberation Sans',sans-serif;color:#000;-webkit-text-stroke:0.3px;">chrM</span>
<span id="t101" class="t" style="left:70.5px;top:420.00px;font-size:11.64px;font-family:'DejaVu Sans','Liberation Sans',sans-serif;color:#000;-webkit-text-stroke:0.3px;letter-spacing:0.240px;">16299</span>
<div style="left:0;top:459px;width:120px;height:1px;background:#b4b4b4;"></div>
<span id="t102" class="t" style="left:4.0px;top:440.00px;font-size:11.64px;font-family:'DejaVu Sans','Liberation Sans',sans-serif;color:#000;-webkit-text-stroke:0.3px;letter-spacing:0.011px;">chr1_G...</span>
<span id="t103" class="t" style="left:66.65px;top:440.00px;font-size:11.64px;font-family:'DejaVu Sans','Liberation Sans',sans-serif;color:#000;-webkit-text-stroke:0.3px;letter-spacing:0.252px;">169725</span>
<div style="left:0;top:479px;width:120px;height:1px;background:#b4b4b4;"></div>
<span id="t104" class="t" style="left:4.0px;top:460.00px;font-size:11.64px;font-family:'DejaVu Sans','Liberation Sans',sans-serif;color:#000;-webkit-text-stroke:0.3px;letter-spacing:0.011px;">chr1_G...</span>
<span id="t105" class="t" style="left:66.65px;top:460.00px;font-size:11.64px;font-family:'DejaVu Sans','Liberation Sans',sans-serif;color:#000;-webkit-text-stroke:0.3px;letter-spacing:0.252px;">241735</span>
<div style="left:0;top:499px;width:120px;height:1px;background:#b4b4b4;"></div>
<span id="t106" class="t" style="left:4.0px;top:480.00px;font-size:11.64px;font-family:'DejaVu Sans','Liberation Sans',sans-serif;color:#000;-webkit-text-stroke:0.3px;letter-spacing:0.011px;">chr1_G...</span>
<span id="t107" class="t" style="left:66.65px;top:480.00px;font-size:11.64px;font-family:'DejaVu Sans','Liberation Sans',sans-serif;color:#000;-webkit-text-stroke:0.3px;letter-spacing:0.252px;">153618</span>
<div style="left:60px;top:0;width:1px;height:488px;background:#b4b4b4;"></div>
<div style="left:119px;top:0;width:1px;height:488px;background:#b4b4b4;"></div>
<div style="left:0;top:0;width:60px;height:20px;border-left:1px solid #b4b4b4;border-right:1px solid #b4b4b4;opacity:0.5"></div>
</div>
<div style="left:1413px;top:283px;width:16px;height:488px;background:#fafafa;"></div>
<div style="left:1417px;top:285px;width:7.5px;height:188px;background:#c1c1c1;border-radius:4px;"></div>
<div style="left:1438px;top:268px;width:21.5px;height:382px;background:#e0e0e0;border-radius:6px;"></div>
<div style="left:1438.5px;top:404px;width:21px;height:123px;background:#fff;border-radius:5px;box-shadow:0 0 1.5px rgba(0,0,0,0.35);"></div>
<svg style="left:1441px;top:280px" width="13" height="16" viewBox="0 0 13 16" ><path d="M3.6 3 L8.6 8 L3.6 13" fill="none" stroke="#3b97cf" stroke-width="2.8" stroke-linecap="butt" stroke-linejoin="miter"/><rect x="0.5" y="2" width="1" height="12" fill="#d0d0d0"/></svg>
<span id="t108" class="t" style="left:1441.2px;top:321px;font-size:12.42px;font-family:'DejaVu Sans','Liberation Sans',sans-serif;letter-spacing:0.0px;-webkit-text-stroke:0.3px;transform-origin:0 0;transform:rotate(90deg) translate(0,-15px);">Bookmarks</span>
<span id="t109" class="t" style="left:1441.2px;top:414px;font-size:12.17px;font-family:'DejaVu Sans','Liberation Sans',sans-serif;letter-spacing:0.0px;-webkit-text-stroke:0.3px;transform-origin:0 0;transform:rotate(90deg) translate(0,-15px);">Current Genome</span>
<span id="t110" class="t" style="left:1441.2px;top:539px;font-size:12.45px;font-family:'DejaVu Sans','Liberation Sans',sans-serif;letter-spacing:0.0px;-webkit-text-stroke:0.3px;transform-origin:0 0;transform:rotate(90deg) translate(0,-15px);">Restriction Sites</span>
<div style="left:1265px;top:801px;width:200px;height:19.5px;border:1px solid #b4b4b4;background:#eeeeee;"></div>
<div style="left:1284px;top:802.5px;width:61.5px;height:17px;background:#eeeaa6;"></div>
<svg style="left:1267px;top:803px" width="14" height="16" viewBox="0 0 14 16" ><path d="M3.2 5 H10.8 L10.2 14.6 H3.8 Z" fill="#e8e8e8" stroke="#1a1a1a" stroke-width="1.1" stroke-linejoin="round"/><path d="M5.4 6.2 V13.4 M7 6.2 V13.4 M8.6 6.2 V13.4" stroke="#1a1a1a" stroke-width="0.9"/><rect x="1.8" y="3" width="10.4" height="1.8" rx="0.5" fill="#1a1a1a"/><path d="M5.2 3 V1.8 H8.8 V3" fill="none" stroke="#1a1a1a" stroke-width="1.1"/></svg>
<span id="t111" class="t" style="left:1327px;top:801.50px;font-size:12.61px;font-family:'DejaVu Sans','Liberation Sans',sans-serif;color:#000;-webkit-text-stroke:0.3px;letter-spacing:0.026px;">705M of 2048M</span>
<div style="left:1345px;top:804px;width:1px;height:15px;background:#444;"></div>
</div></body></html>
